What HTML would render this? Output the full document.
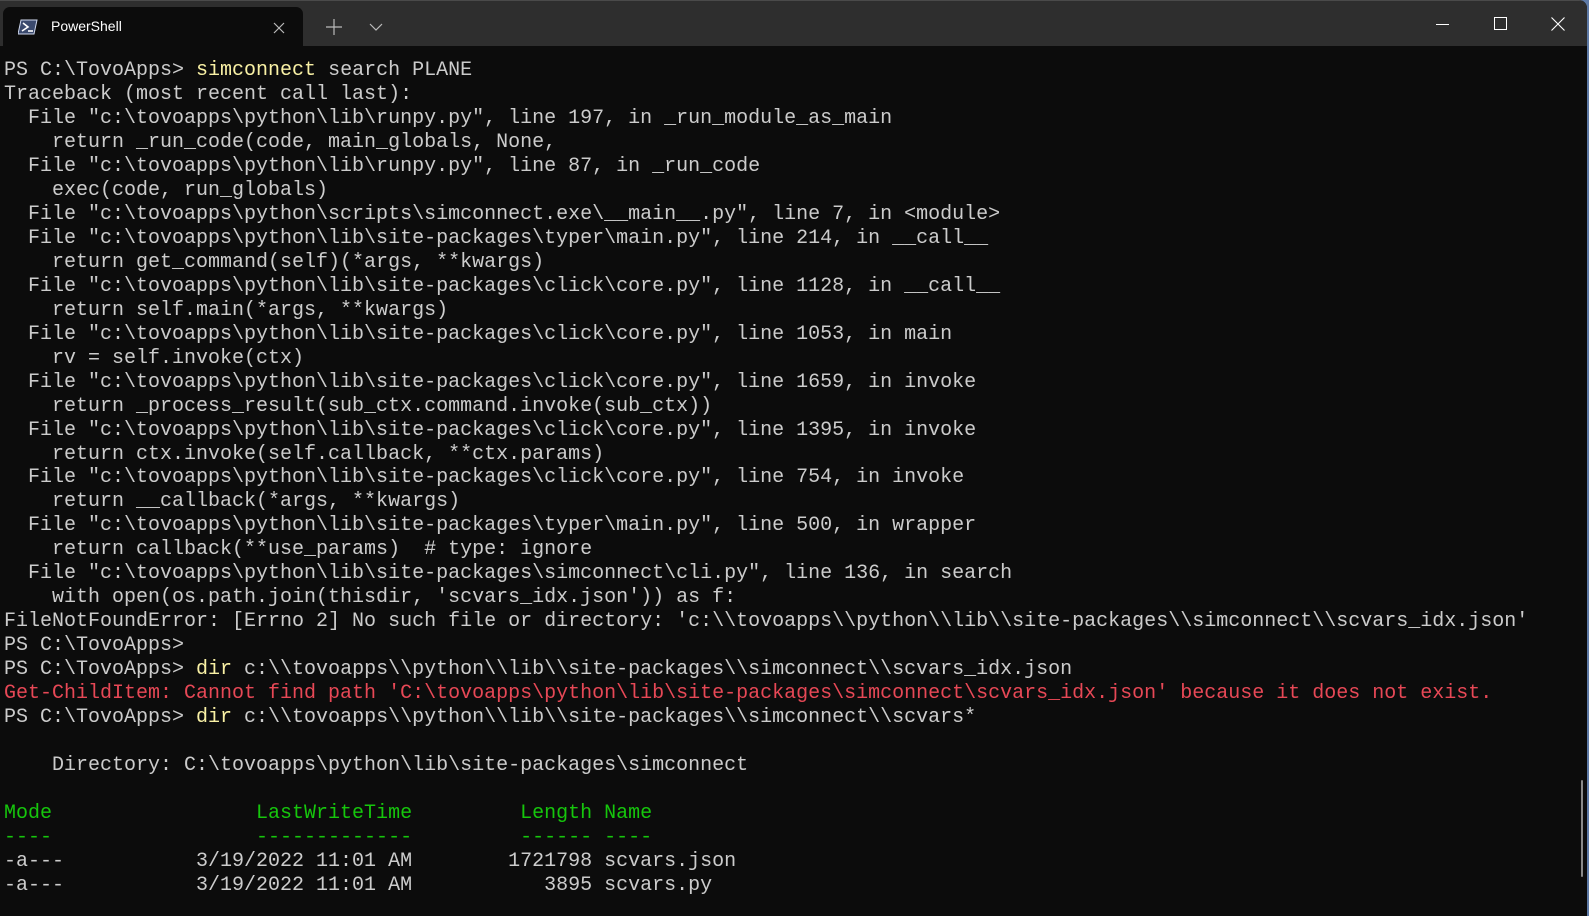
<!DOCTYPE html>
<html><head><meta charset="utf-8"><style>
html,body{margin:0;padding:0;width:1589px;height:916px;overflow:hidden;background:#5e7aa6;}
.win{position:absolute;left:0;top:0;width:1587px;height:916px;background:#0c0c0c;border-top-right-radius:8px;overflow:hidden;}
.title{position:absolute;left:0;top:0;width:100%;height:46px;background:#2e2e2e;border-top:1px solid #4a4a4a;box-sizing:border-box;}
.tab{position:absolute;left:3px;top:6px;width:300px;height:40px;background:#0c0c0c;border-radius:7px 7px 0 0;}
.tab .t{position:absolute;left:48px;top:11px;font:14px "Liberation Sans",sans-serif;color:#fff;}
.term{position:absolute;left:4px;top:59px;font-family:"Liberation Mono",monospace;font-size:20px;color:#cccccc;white-space:pre;}
.term div{height:23.98px;line-height:23.98px;}
.y{color:#f9f1a5}.r{color:#e74856}.g{color:#16c60c}
.sb{position:absolute;left:1581px;top:780px;width:2px;height:97px;background:#8a8a8a;border-radius:1px;}
</style></head><body><div class="win">
<div class="title">
<div class="tab">
<svg style="position:absolute;left:15px;top:12px" width="20" height="16" viewBox="0 0 20 16"><path d="M3 1h16l-3 14H0z" fill="#3b4a6e" stroke="#cfd8ee" stroke-width="1"/><path d="M5 4l5 4-6 4" fill="none" stroke="#fff" stroke-width="1.6"/><path d="M10 12h5" stroke="#fff" stroke-width="1.6"/></svg>
<span class="t">PowerShell</span>
<svg style="position:absolute;left:270px;top:15px" width="12" height="12"><path d="M1 1l10 10M11 1L1 11" stroke="#bbb" stroke-width="1.2"/></svg>
</div>
<svg style="position:absolute;left:326px;top:18px" width="16" height="16"><path d="M8 0v16M0 8h16" stroke="#bbb" stroke-width="1.2"/></svg>
<svg style="position:absolute;left:369px;top:22px" width="14" height="8"><path d="M1 1l6 6 6-6" fill="none" stroke="#bbb" stroke-width="1.2"/></svg>
<svg style="position:absolute;left:1436px;top:22px" width="14" height="3"><path d="M0 1.5h13" stroke="#fff" stroke-width="1"/></svg>
<svg style="position:absolute;left:1494px;top:16px" width="14" height="14"><rect x="0.5" y="0.5" width="12" height="12" fill="none" stroke="#fff" stroke-width="1"/></svg>
<svg style="position:absolute;left:1551px;top:16px" width="14" height="14"><path d="M0.5 0.5l13 13M13.5 0.5l-13 13" stroke="#fff" stroke-width="1.1"/></svg>
</div>
<div class="term"><div>PS C:\TovoApps&gt; <span class="y">simconnect</span> search PLANE</div><div>Traceback (most recent call last):</div><div>  File "c:\tovoapps\python\lib\runpy.py", line 197, in _run_module_as_main</div><div>    return _run_code(code, main_globals, None,</div><div>  File "c:\tovoapps\python\lib\runpy.py", line 87, in _run_code</div><div>    exec(code, run_globals)</div><div>  File "c:\tovoapps\python\scripts\simconnect.exe\__main__.py", line 7, in &lt;module&gt;</div><div>  File "c:\tovoapps\python\lib\site-packages\typer\main.py", line 214, in __call__</div><div>    return get_command(self)(*args, **kwargs)</div><div>  File "c:\tovoapps\python\lib\site-packages\click\core.py", line 1128, in __call__</div><div>    return self.main(*args, **kwargs)</div><div>  File "c:\tovoapps\python\lib\site-packages\click\core.py", line 1053, in main</div><div>    rv = self.invoke(ctx)</div><div>  File "c:\tovoapps\python\lib\site-packages\click\core.py", line 1659, in invoke</div><div>    return _process_result(sub_ctx.command.invoke(sub_ctx))</div><div>  File "c:\tovoapps\python\lib\site-packages\click\core.py", line 1395, in invoke</div><div>    return ctx.invoke(self.callback, **ctx.params)</div><div>  File "c:\tovoapps\python\lib\site-packages\click\core.py", line 754, in invoke</div><div>    return __callback(*args, **kwargs)</div><div>  File "c:\tovoapps\python\lib\site-packages\typer\main.py", line 500, in wrapper</div><div>    return callback(**use_params)  # type: ignore</div><div>  File "c:\tovoapps\python\lib\site-packages\simconnect\cli.py", line 136, in search</div><div>    with open(os.path.join(thisdir, 'scvars_idx.json')) as f:</div><div>FileNotFoundError: [Errno 2] No such file or directory: 'c:\\tovoapps\\python\\lib\\site-packages\\simconnect\\scvars_idx.json'</div><div>PS C:\TovoApps&gt;</div><div>PS C:\TovoApps&gt; <span class="y">dir</span> c:\\tovoapps\\python\\lib\\site-packages\\simconnect\\scvars_idx.json</div><div class="r">Get-ChildItem: Cannot find path 'C:\tovoapps\python\lib\site-packages\simconnect\scvars_idx.json' because it does not exist.</div><div>PS C:\TovoApps&gt; <span class="y">dir</span> c:\\tovoapps\\python\\lib\\site-packages\\simconnect\\scvars*</div><div> </div><div>    Directory: C:\tovoapps\python\lib\site-packages\simconnect</div><div> </div><div class="g">Mode                 LastWriteTime         Length Name</div><div class="g">----                 -------------         ------ ----</div><div>-a---           3/19/2022 11:01 AM        1721798 scvars.json</div><div>-a---           3/19/2022 11:01 AM           3895 scvars.py</div></div>
<div class="sb"></div>
</div></body></html>
